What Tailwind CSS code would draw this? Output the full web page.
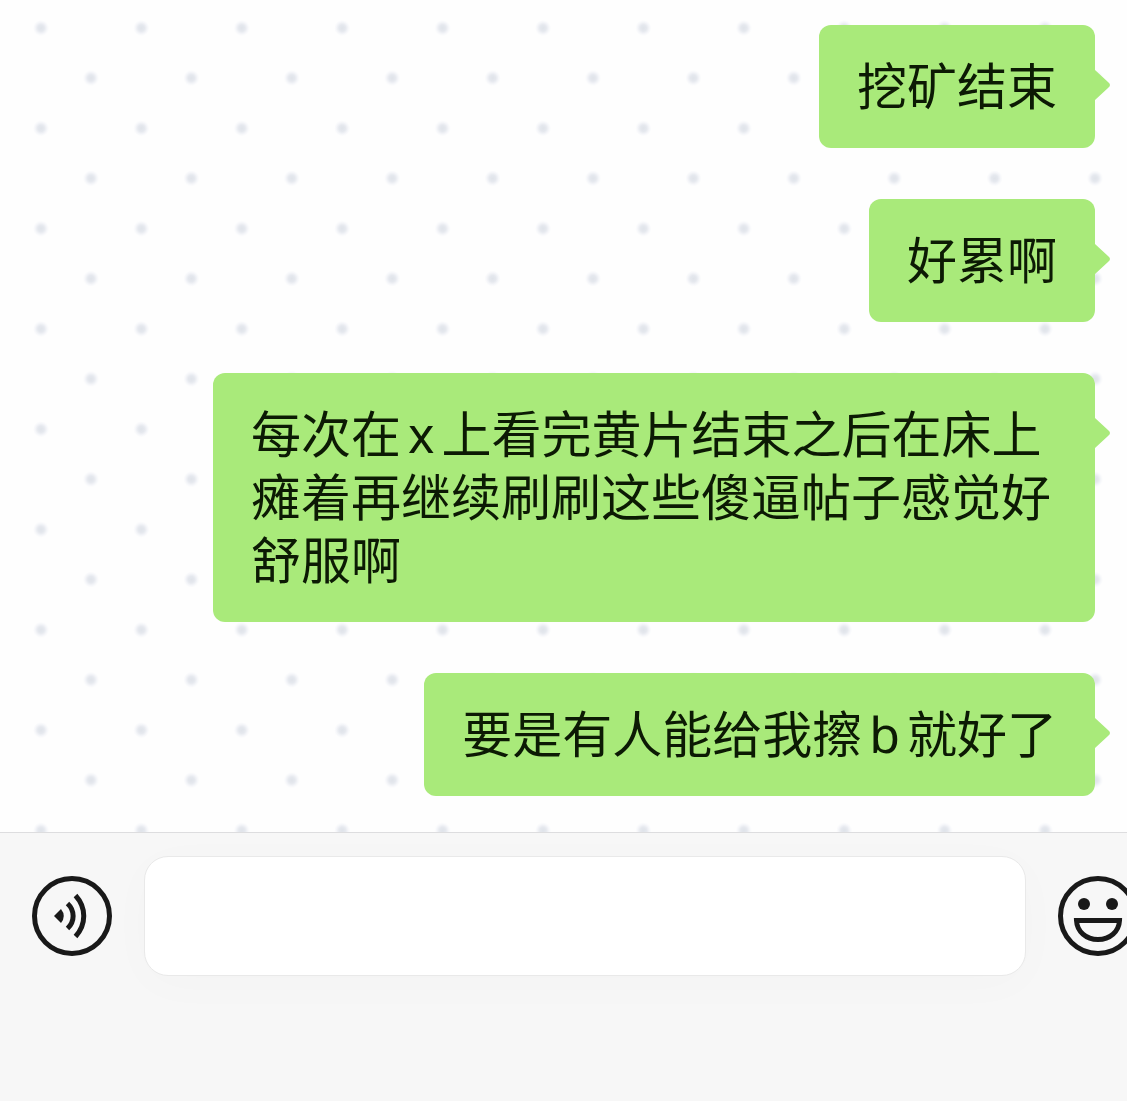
<!DOCTYPE html>
<html lang="zh-CN">
<head>
    <meta charset="UTF-8" />
    <meta name="viewport" content="width=device-width, initial-scale=1.0" />
    <title>聊天</title>
    <script src="https://cdn.jsdelivr.net/npm/@tailwindcss/browser@4"></script>
</head>
<body class="flex min-h-screen flex-col overflow-x-hidden bg-[#f7f7f7] font-['Noto_Sans','Noto_Sans_CJK_SC',sans-serif]">
    <main class="relative overflow-hidden bg-[#fefefe] px-8 pt-[25px] pb-9">
        <!-- wallpaper -->
        <svg class="absolute inset-0 h-full w-full" aria-hidden="true">
            <defs>
                <radialGradient id="dot">
                    <stop offset="0" stop-color="#dfe3e9" />
                    <stop offset="0.4" stop-color="#e5e8ee" />
                    <stop offset="0.75" stop-color="#f6f7fa" />
                    <stop offset="1" stop-color="#fefefe" />
                </radialGradient>
                <pattern id="dots" width="100.4" height="100.3" patternUnits="userSpaceOnUse">
                    <circle cx="41" cy="28" r="8" fill="url(#dot)" />
                    <circle cx="91" cy="78" r="8" fill="url(#dot)" />
                </pattern>
            </defs>
            <rect width="100%" height="100%" fill="url(#dots)" />
        </svg>

        <ul class="relative flex flex-col items-end gap-[51px] text-[50px] leading-[63px] text-[#0c1a04]">
            <li class="relative max-w-[882px] rounded-xl bg-[#a9ea7a] px-[38px] py-[30px]">
                挖矿结束
                <svg class="absolute top-11 left-full h-8 w-4" viewBox="0 0 16 32" fill="#a9ea7a" aria-hidden="true"><path d="M-1 0L0 1L13 13Q17 16 13 19L0 31L-1 32Z" /></svg>
            </li>
            <li class="relative max-w-[882px] rounded-xl bg-[#a9ea7a] px-[38px] py-[30px]">
                好累啊
                <svg class="absolute top-11 left-full h-8 w-4" viewBox="0 0 16 32" fill="#a9ea7a" aria-hidden="true"><path d="M-1 0L0 1L13 13Q17 16 13 19L0 31L-1 32Z" /></svg>
            </li>
            <li class="relative max-w-[882px] rounded-xl bg-[#a9ea7a] px-[38px] py-[30px]">
                每次在<span class="mx-[7px]">x</span>上看完黄片结束之后在床上瘫着再继续刷刷这些傻逼帖子感觉好舒服啊
                <svg class="absolute top-11 left-full h-8 w-4" viewBox="0 0 16 32" fill="#a9ea7a" aria-hidden="true"><path d="M-1 0L0 1L13 13Q17 16 13 19L0 31L-1 32Z" /></svg>
            </li>
            <li class="relative max-w-[882px] rounded-xl bg-[#a9ea7a] px-[38px] py-[30px]">
                要是有人能给我擦<span class="mx-[7px]">b</span>就好了
                <svg class="absolute top-11 left-full h-8 w-4" viewBox="0 0 16 32" fill="#a9ea7a" aria-hidden="true"><path d="M-1 0L0 1L13 13Q17 16 13 19L0 31L-1 32Z" /></svg>
            </li>
        </ul>
    </main>

    <footer class="flex-1 overflow-hidden border-t border-[#dddddf] bg-[#f7f7f7] pt-[23px] pb-16">
        <form class="-mr-[11px] flex items-center gap-8 pl-8">
            <button type="button" aria-label="语音" class="shrink-0">
                <svg class="h-20 w-20" viewBox="0 0 80 80" fill="none" stroke="#191919" stroke-width="5">
                    <circle cx="40" cy="40" r="37.500" />
                    <path d="M22 40L29 33Q34.500 40 29 47Z" fill="#191919" stroke="none" />
                    <path d="M35.500 27.500C43 34.500 43 45.500 35.500 52.500" />
                    <path d="M43.500 19.500C54.500 31.500 54.500 48.500 43.500 60.500" />
                </svg>
            </button>
            <input type="text" aria-label="消息" class="h-[120px] min-w-0 flex-1 rounded-3xl border border-[#e9e9e9] bg-white px-6 text-[50px] shadow-[0_8px_48px_rgba(0,0,0,0.02)] outline-none" />
            <button type="button" aria-label="表情" class="shrink-0">
                <svg class="h-20 w-20" viewBox="0 0 80 80" fill="none" stroke="#191919" stroke-width="5">
                    <circle cx="40" cy="40" r="37.500" />
                    <circle cx="26" cy="28" r="6" fill="#191919" stroke="none" />
                    <circle cx="54" cy="28" r="6" fill="#191919" stroke="none" />
                    <path d="M18.500 44.500H61.500C61 55.500 52 63.500 40 63.500S19 55.500 18.500 44.500Z" />
                </svg>
            </button>
        </form>
    </footer>
</body>
</html>
